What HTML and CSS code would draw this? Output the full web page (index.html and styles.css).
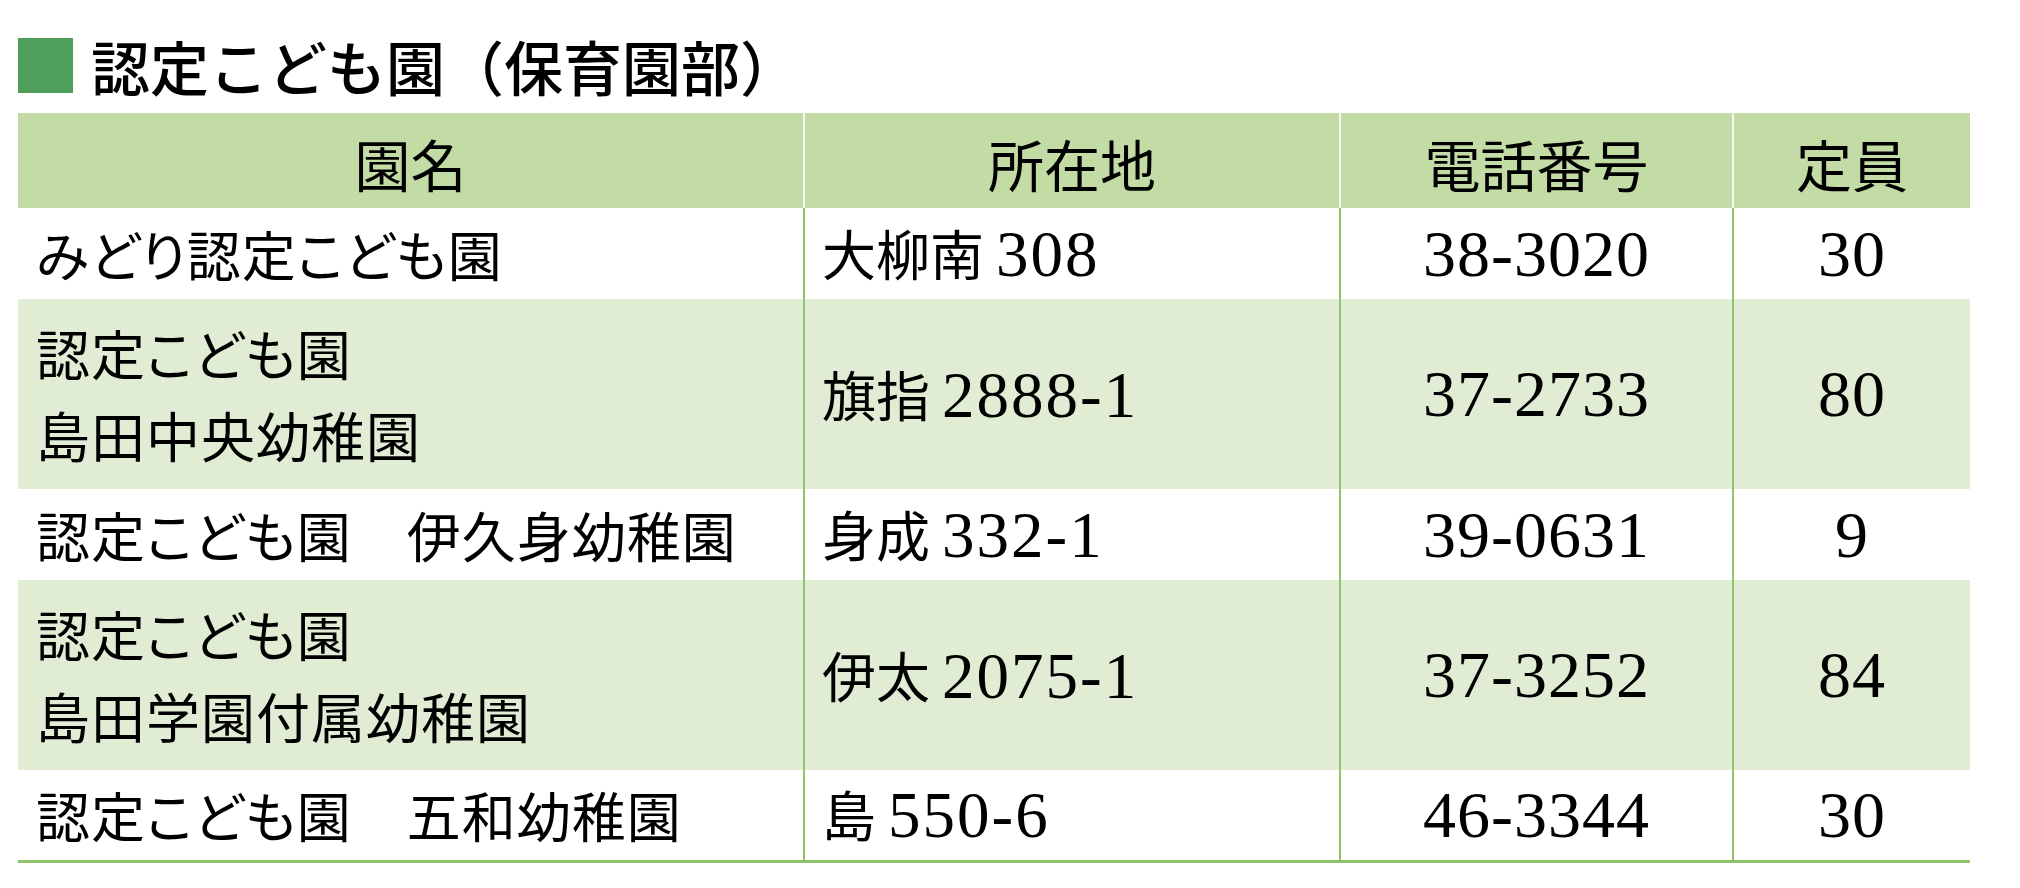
FILE: index.html
```html
<!DOCTYPE html>
<html lang="ja">
<head>
<meta charset="utf-8">
<title>認定こども園（保育園部）</title>
<link rel="stylesheet" href="styles.css">
</head>
<body>
<div class="page">
  <div class="title">
    <span class="title-mark"></span>
    <h1 class="title-text">認定こども園（保育園部）</h1>
  </div>
  <table class="list">
    <colgroup>
      <col class="c-name">
      <col class="c-addr">
      <col class="c-tel">
      <col class="c-cap">
    </colgroup>
    <thead>
      <tr class="head-row">
        <th>園名</th>
        <th>所在地</th>
        <th>電話番号</th>
        <th>定員</th>
      </tr>
    </thead>
    <tbody>
      <tr class="row-single">
        <td class="name">みどり認定こども園</td>
        <td class="addr">大柳南 <span class="num">308</span></td>
        <td class="tel">38-3020</td>
        <td class="cap">30</td>
      </tr>
      <tr class="row-double alt">
        <td class="name">認定こども園<br>島田中央幼稚園</td>
        <td class="addr">旗指 <span class="num">2888-1</span></td>
        <td class="tel">37-2733</td>
        <td class="cap">80</td>
      </tr>
      <tr class="row-single">
        <td class="name">認定こども園　伊久身幼稚園</td>
        <td class="addr">身成 <span class="num">332-1</span></td>
        <td class="tel">39-0631</td>
        <td class="cap">9</td>
      </tr>
      <tr class="row-double alt">
        <td class="name">認定こども園<br>島田学園付属幼稚園</td>
        <td class="addr">伊太 <span class="num">2075-1</span></td>
        <td class="tel">37-3252</td>
        <td class="cap">84</td>
      </tr>
      <tr class="row-single last">
        <td class="name">認定こども園　五和幼稚園</td>
        <td class="addr">島 <span class="num">550-6</span></td>
        <td class="tel">46-3344</td>
        <td class="cap">30</td>
      </tr>
    </tbody>
  </table>
</div>
</body>
</html>
```

FILE: styles.css
```css
html, body {
  margin: 0;
  padding: 0;
  background: #ffffff;
}

.page {
  padding: 38px 0 0 18px;
  font-family: "Noto Sans CJK JP", "Noto Sans", sans-serif;
  color: #000;
}

.title {
  display: flex;
  align-items: center;
  height: 55px;
  gap: 18px;
}

.title-mark {
  width: 55px;
  height: 55px;
  background: #4f9e59;
  flex: none;
}

.title-text {
  margin: 0;
  font-size: 59px;
  font-weight: 500;
  line-height: 55px;
  letter-spacing: 0;
}

.list {
  margin-top: 20px;
  width: 1952px;
  table-layout: fixed;
  border-collapse: collapse;
  border-spacing: 0;
}

.c-name { width: 786px; }
.c-addr { width: 536px; }
.c-tel { width: 393px; }
.c-cap { width: 237px; }

.head-row {
  height: 95px;
  background: #c3dba4;
}

.head-row th {
  font-size: 56px;
  font-weight: 400;
  padding: 6px 0 0 0;
  text-align: center;
  vertical-align: middle;
  border-left: 2px solid #f4f8ee;
  line-height: 1.3;
}

.head-row th:first-child {
  border-left: none;
}

.list td {
  font-size: 54px;
  font-weight: 400;
  line-height: 82px;
  padding: 0;
  vertical-align: middle;
  border-left: 2px solid #8fc26a;
  white-space: nowrap;
}

.list td.name {
  border-left: none;
  padding-left: 18px;
  font-feature-settings: "palt" 1;
  letter-spacing: 1px;
}

.row-single { height: 91px; }
.row-double { height: 190px; }

.alt { background: #e0edd4; }

.last td {
  border-bottom: 3px solid #8fc26a;
}

.addr {
  padding-left: 17px !important;
}

.num {
  font-family: "Liberation Serif", serif;
  font-size: 65px;
  letter-spacing: 2px;
}

.tel, .cap {
  text-align: center;
  font-family: "Liberation Serif", serif;
  font-size: 66px !important;
  letter-spacing: 1px;
}
```
